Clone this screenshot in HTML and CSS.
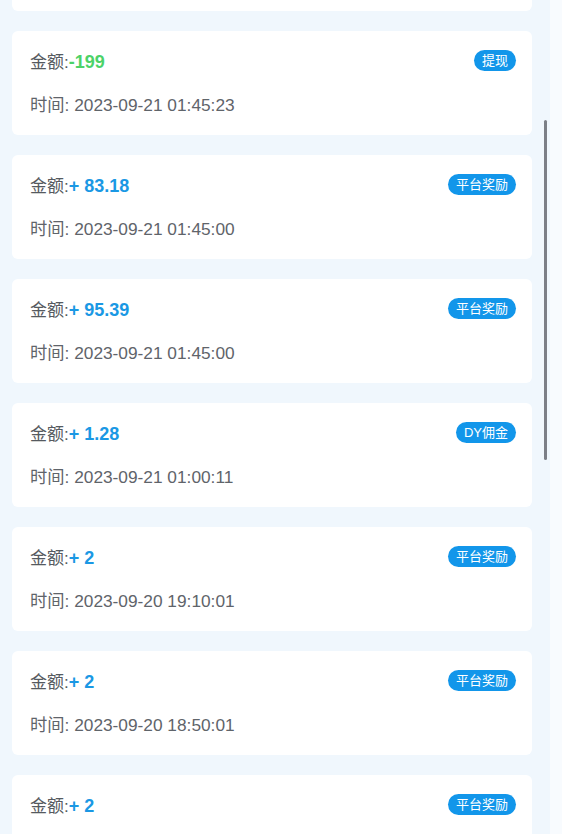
FILE: index.html
```html
<!DOCTYPE html>
<html lang="zh-CN">
<head>
  <meta charset="UTF-8" />
  <meta name="viewport" content="width=device-width, initial-scale=1" />
  <title>资金明细</title>
  <link rel="stylesheet" href="styles.css">
</head>
<body>
  <div class="page">
    <div class="viewport">
      <ul class="record-list">
        <!-- previous record, scrolled out of view -->
        <li class="record record-cut"></li>
        <li class="record">
          <div class="record-top">
            <span class="amount-label">金额:<b class="amount minus">-199</b></span>
            <span class="tag">提现</span>
          </div>
          <div class="record-time">时间: 2023-09-21 01:45:23</div>
        </li>
        <li class="record">
          <div class="record-top">
            <span class="amount-label">金额:<b class="amount plus">+ 83.18</b></span>
            <span class="tag">平台奖励</span>
          </div>
          <div class="record-time">时间: 2023-09-21 01:45:00</div>
        </li>
        <li class="record">
          <div class="record-top">
            <span class="amount-label">金额:<b class="amount plus">+ 95.39</b></span>
            <span class="tag">平台奖励</span>
          </div>
          <div class="record-time">时间: 2023-09-21 01:45:00</div>
        </li>
        <li class="record">
          <div class="record-top">
            <span class="amount-label">金额:<b class="amount plus">+ 1.28</b></span>
            <span class="tag">DY佣金</span>
          </div>
          <div class="record-time">时间: 2023-09-21 01:00:11</div>
        </li>
        <li class="record">
          <div class="record-top">
            <span class="amount-label">金额:<b class="amount plus">+ 2</b></span>
            <span class="tag">平台奖励</span>
          </div>
          <div class="record-time">时间: 2023-09-20 19:10:01</div>
        </li>
        <li class="record">
          <div class="record-top">
            <span class="amount-label">金额:<b class="amount plus">+ 2</b></span>
            <span class="tag">平台奖励</span>
          </div>
          <div class="record-time">时间: 2023-09-20 18:50:01</div>
        </li>
        <li class="record">
          <div class="record-top">
            <span class="amount-label">金额:<b class="amount plus">+ 2</b></span>
            <span class="tag">平台奖励</span>
          </div>
        </li>
      </ul>
      <div class="scrollbar"></div>
    </div>
    <div class="edge"></div>
  </div>
</body>
</html>
```
FILE: styles.css
```css
* {
  margin: 0;
  padding: 0;
  box-sizing: border-box;
}

body {
  font-family: "Liberation Sans", Arial, "Noto Sans CJK SC", sans-serif;
  background: #f0f7fd;
  height: 834px;
  overflow: hidden;
}

.page {
  display: flex;
  height: 834px;
}

.viewport {
  position: relative;
  flex: 1;
  overflow: hidden;
}

.record-list {
  list-style: none;
  display: flex;
  flex-direction: column;
  gap: 20px;
  padding: 0 18px 0 12px;
}

.record {
  background: #ffffff;
  border-radius: 6px;
  height: 104px;
  flex-shrink: 0;
  padding: 18px 16px 0 18px;
}

.record-cut {
  height: 11px;
  padding: 0;
  border-radius: 0 0 6px 6px;
}

.record-top {
  display: flex;
  justify-content: space-between;
  align-items: center;
  height: 22px;
}

.amount-label {
  font-size: 17px;
  color: #555a60;
}

.amount {
  font-weight: bold;
  font-size: 18px;
}

.amount.plus {
  color: #1a98e4;
}

.amount.minus {
  color: #4cd268;
}

.tag {
  background: #1296ea;
  color: #ffffff;
  font-size: 13px;
  line-height: 21px;
  height: 21px;
  padding: 0 8px;
  border-radius: 11px;
}

.record-time {
  font-size: 17.3px;
  color: #5f646a;
  margin-top: 20px;
}

.scrollbar {
  position: absolute;
  right: 3px;
  top: 120px;
  width: 3px;
  height: 340px;
  border-radius: 2px;
  background: #7b7f87;
}

.edge {
  width: 12px;
  background: #f8fbfe;
}
```
